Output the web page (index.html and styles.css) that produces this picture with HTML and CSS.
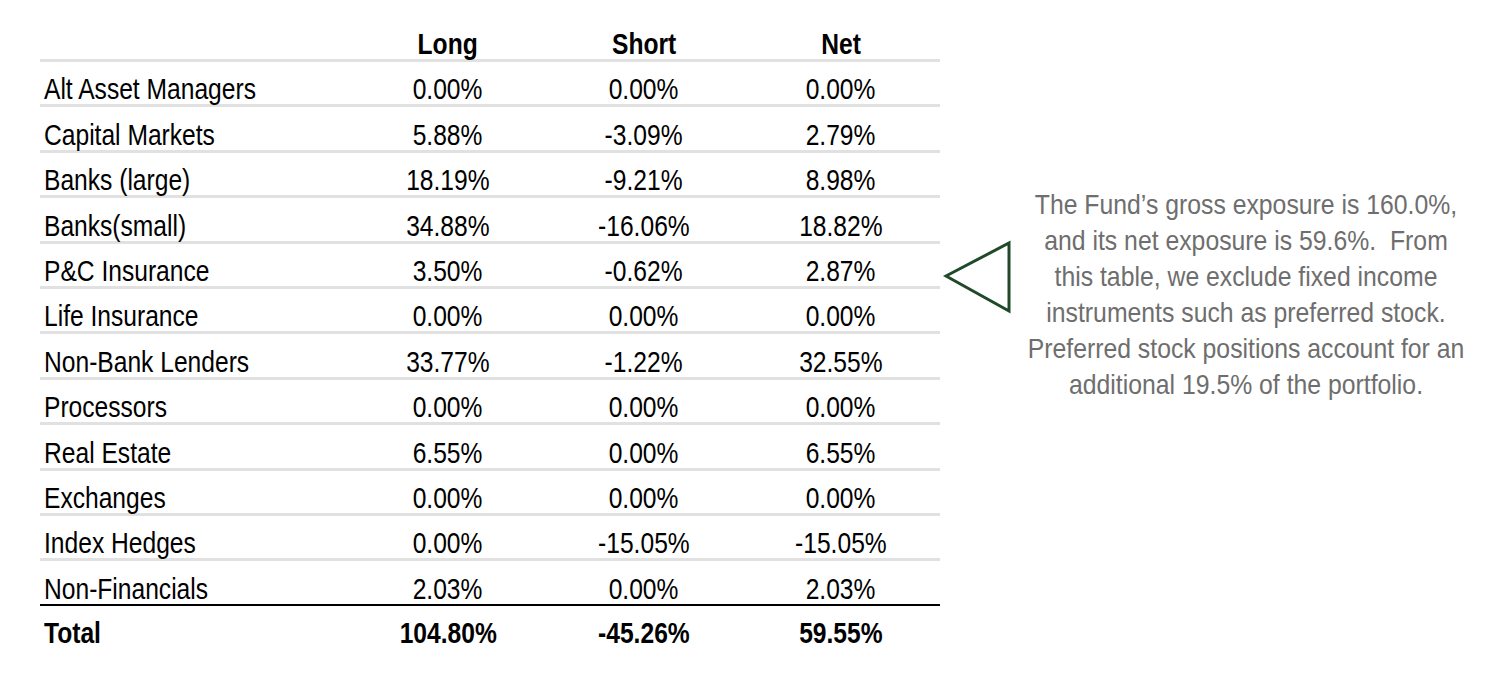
FILE: index.html
```html
<!DOCTYPE html>
<html lang="en">
<head>
<meta charset="utf-8">
<title>Exposure by Sector</title>
<link rel="stylesheet" href="styles.css">
</head>
<body>
<main class="page">
  <table class="exposure">
    <colgroup>
      <col class="c-label">
      <col class="c-num">
      <col class="c-num">
      <col class="c-net">
    </colgroup>
    <thead>
      <tr>
        <th class="label"></th>
        <th><span class="nar">Long</span></th>
        <th><span class="nar">Short</span></th>
        <th><span class="nar">Net</span></th>
      </tr>
    </thead>
    <tbody>
      <tr><td class="label"><span class="nar">Alt Asset Managers</span></td><td><span class="nar">0.00%</span></td><td><span class="nar">0.00%</span></td><td><span class="nar">0.00%</span></td></tr>
      <tr><td class="label"><span class="nar">Capital Markets</span></td><td><span class="nar">5.88%</span></td><td><span class="nar">-3.09%</span></td><td><span class="nar">2.79%</span></td></tr>
      <tr><td class="label"><span class="nar">Banks (large)</span></td><td><span class="nar">18.19%</span></td><td><span class="nar">-9.21%</span></td><td><span class="nar">8.98%</span></td></tr>
      <tr><td class="label"><span class="nar">Banks(small)</span></td><td><span class="nar">34.88%</span></td><td><span class="nar">-16.06%</span></td><td><span class="nar">18.82%</span></td></tr>
      <tr><td class="label"><span class="nar">P&amp;C Insurance</span></td><td><span class="nar">3.50%</span></td><td><span class="nar">-0.62%</span></td><td><span class="nar">2.87%</span></td></tr>
      <tr><td class="label"><span class="nar">Life Insurance</span></td><td><span class="nar">0.00%</span></td><td><span class="nar">0.00%</span></td><td><span class="nar">0.00%</span></td></tr>
      <tr><td class="label"><span class="nar">Non-Bank Lenders</span></td><td><span class="nar">33.77%</span></td><td><span class="nar">-1.22%</span></td><td><span class="nar">32.55%</span></td></tr>
      <tr><td class="label"><span class="nar">Processors</span></td><td><span class="nar">0.00%</span></td><td><span class="nar">0.00%</span></td><td><span class="nar">0.00%</span></td></tr>
      <tr><td class="label"><span class="nar">Real Estate</span></td><td><span class="nar">6.55%</span></td><td><span class="nar">0.00%</span></td><td><span class="nar">6.55%</span></td></tr>
      <tr><td class="label"><span class="nar">Exchanges</span></td><td><span class="nar">0.00%</span></td><td><span class="nar">0.00%</span></td><td><span class="nar">0.00%</span></td></tr>
      <tr><td class="label"><span class="nar">Index Hedges</span></td><td><span class="nar">0.00%</span></td><td><span class="nar">-15.05%</span></td><td><span class="nar">-15.05%</span></td></tr>
      <tr class="last"><td class="label"><span class="nar">Non-Financials</span></td><td><span class="nar">2.03%</span></td><td><span class="nar">0.00%</span></td><td><span class="nar">2.03%</span></td></tr>
    </tbody>
    <tfoot>
      <tr><td class="label"><span class="nar">Total</span></td><td><span class="nar">104.80%</span></td><td><span class="nar">-45.26%</span></td><td><span class="nar">59.55%</span></td></tr>
    </tfoot>
  </table>
  <svg class="pointer" width="70" height="74" viewBox="0 0 70 74" aria-hidden="true">
    <polygon points="3,36 66,3 66,71" fill="none" stroke="#1f4a2a" stroke-width="3"/>
  </svg>
  <div class="note-wrap">
    <p class="note">The Fund’s gross exposure is 160.0%,<br>and its net exposure is 59.6%.&nbsp; From<br>this table, we exclude fixed income<br>instruments such as preferred stock.<br>Preferred stock positions account for an<br>additional 19.5% of the portfolio.</p>
  </div>
</main>
</body>
</html>
```

FILE: styles.css
```css
html, body {
  margin: 0;
  padding: 0;
  background: #ffffff;
}

body {
  font-family: "Liberation Sans", Arial, sans-serif;
  color: #000;
}

.page {
  display: flex;
  align-items: flex-start;
  padding: 24px 0 0 40px;
}

/* emulate Arial Narrow by condensing Liberation Sans */
.nar {
  display: inline-block;
  white-space: nowrap;
  transform: scaleX(0.82);
  transform-origin: center;
}

.label .nar {
  transform-origin: left center;
}

.exposure {
  width: 900px;
  table-layout: fixed;
  border-collapse: collapse;
  font-size: 30px;
  flex: none;
}

.c-label { width: 310px; }
.c-num { width: 196px; }
.c-net { width: 198px; }

.exposure th,
.exposure td {
  padding: 0;
  text-align: center;
  vertical-align: bottom;
  line-height: 30px;
}

.exposure .label {
  text-align: left;
  padding-left: 4px;
}

.exposure thead th {
  font-weight: bold;
  height: 35px;
  padding-bottom: 0;
  border-bottom: 3px solid #e1e1e1;
}

.exposure tbody td {
  height: 42.4px;
  border-bottom: 3px solid #e1e1e1;
}

.exposure tbody tr.last td {
  border-bottom: 2px solid #000;
}

.exposure tfoot td {
  font-weight: bold;
  vertical-align: top;
  padding-top: 12px;
  height: 30px;
}

.pointer {
  flex: none;
  margin: 216px 0 0 3px;
}

.note-wrap {
  flex: none;
  width: 466px;
  margin-top: 163px;
}

.note {
  margin: 0 -20px;
  width: 506px;
  text-align: center;
  white-space: nowrap;
  font-size: 28px;
  line-height: 36px;
  color: #6e6e6e;
  transform: scaleX(0.885);
  transform-origin: center top;
}
```
